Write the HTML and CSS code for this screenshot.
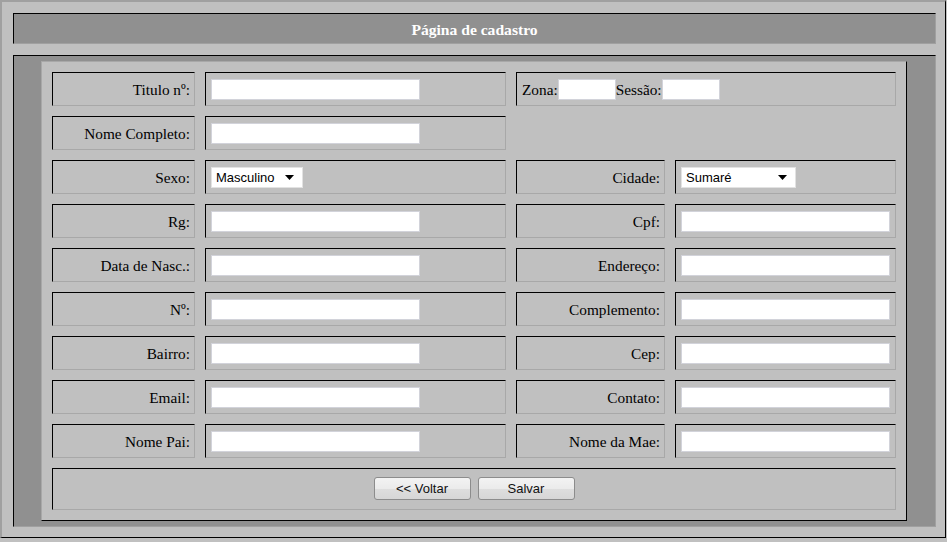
FILE: index.html
```html
<!DOCTYPE html>
<html lang="pt-BR">
<head>
<meta charset="utf-8">
<title>Página de cadastro</title>
<link rel="stylesheet" href="styles.css">
</head>
<body>
<div class="frame">
  <div class="title-cell">Página de cadastro</div>
  <div class="main-cell">
    <form class="form-table">
      <div class="cell label">Titulo nº:</div>
      <div class="cell field"><input class="text" type="text"></div>
      <div class="cell field span2 inline"><span>Zona:</span><input class="small" type="text"><span>Sessão:</span><input class="small" type="text"></div>

      <div class="cell label">Nome Completo:</div>
      <div class="cell field"><input class="text" type="text"></div>
      <div class="span2"></div>

      <div class="cell label">Sexo:</div>
      <div class="cell field"><select class="sel sel-sexo"><option>Masculino</option><option>Feminino</option></select></div>
      <div class="cell label">Cidade:</div>
      <div class="cell field"><select class="sel sel-cidade"><option>Sumaré</option></select></div>

      <div class="cell label">Rg:</div>
      <div class="cell field"><input class="text" type="text"></div>
      <div class="cell label">Cpf:</div>
      <div class="cell field"><input class="text" type="text"></div>

      <div class="cell label">Data de Nasc.:</div>
      <div class="cell field"><input class="text" type="text"></div>
      <div class="cell label">Endereço:</div>
      <div class="cell field"><input class="text" type="text"></div>

      <div class="cell label">Nº:</div>
      <div class="cell field"><input class="text" type="text"></div>
      <div class="cell label">Complemento:</div>
      <div class="cell field"><input class="text" type="text"></div>

      <div class="cell label">Bairro:</div>
      <div class="cell field"><input class="text" type="text"></div>
      <div class="cell label">Cep:</div>
      <div class="cell field"><input class="text" type="text"></div>

      <div class="cell label">Email:</div>
      <div class="cell field"><input class="text" type="text"></div>
      <div class="cell label">Contato:</div>
      <div class="cell field"><input class="text" type="text"></div>

      <div class="cell label">Nome Pai:</div>
      <div class="cell field"><input class="text" type="text"></div>
      <div class="cell label">Nome da Mae:</div>
      <div class="cell field"><input class="text" type="text"></div>

      <div class="cell actions span4">
        <button type="button" class="btn">&lt;&lt; Voltar</button>
        <button type="button" class="btn">Salvar</button>
      </div>
    </form>
  </div>
</div>
</body>
</html>
```

FILE: styles.css
```css
html, body {
  margin: 0;
  padding: 0;
  background: #c0c0c0;
}

body {
  font-family: "Liberation Serif", "Times New Roman", serif;
  font-size: 15.3px;
  color: #000;
}

.frame {
  box-sizing: border-box;
  width: 946px;
  height: 538px;
  border-style: solid;
  border-width: 2px 1px 1px 2px;
  border-color: #a0a0a0 #000 #000 #a0a0a0;
  padding: 11px 9px 10px 11px;
  display: flex;
  flex-direction: column;
  gap: 11px;
}

.title-cell {
  box-sizing: border-box;
  height: 31px;
  background: #909090;
  border-style: solid;
  border-width: 1px;
  border-color: #000 #a0a0a0 #a0a0a0 #000;
  color: #fff;
  font-size: 15.6px;
  font-weight: bold;
  display: flex;
  align-items: center;
  justify-content: center;
  padding-top: 3px;
}

.main-cell {
  box-sizing: border-box;
  height: 472px;
  background: #909090;
  border-style: solid;
  border-width: 1px;
  border-color: #000 #a0a0a0 #a0a0a0 #000;
  padding: 5px 28px 5px 27px;
}

.form-table {
  box-sizing: border-box;
  margin: 0;
  width: 866px;
  height: 460px;
  background: #c0c0c0;
  border-style: solid;
  border-width: 1px;
  border-color: #a8a8a8 #000 #000 #a8a8a8;
  padding: 10px;
  display: grid;
  grid-template-columns: 143px 301px 149px 221px;
  grid-template-rows: repeat(9, 34px) 42px;
  gap: 10px;
}

.cell {
  box-sizing: border-box;
  border-style: solid;
  border-width: 1px;
  border-color: #000 #a8a8a8 #a8a8a8 #000;
  display: flex;
  align-items: center;
}

.span2 { grid-column: span 2; }
.span4 { grid-column: span 4; }

.label {
  justify-content: flex-end;
  padding-right: 4px;
  padding-top: 2px;
  white-space: nowrap;
}

.field {
  padding-left: 5px;
}

.inline span {
  padding-top: 2px;
}

input {
  box-sizing: border-box;
  height: 21px;
  margin: 0;
  background: #fff;
  border: 1px solid #d2d3da;
  font-family: "Liberation Sans", Arial, sans-serif;
  font-size: 13px;
  padding: 0 2px;
}

.text { width: 209px; }
.small { width: 58px; }

.sel {
  box-sizing: border-box;
  height: 21px;
  margin: 0;
  -webkit-appearance: none;
  appearance: none;
  background-color: #fff;
  background-image: url("data:image/svg+xml,%3Csvg xmlns='http://www.w3.org/2000/svg' width='9' height='5'%3E%3Cpath d='M0 0h9L4.5 5z' fill='%23000'/%3E%3C/svg%3E");
  background-repeat: no-repeat;
  background-position: right 8px center;
  border: 1px solid #e2e2e2;
  border-radius: 0;
  font-family: "Liberation Sans", Arial, sans-serif;
  font-size: 13px;
  color: #000;
  padding: 0 0 0 4px;
}

.sel-sexo { width: 92px; }
.sel-cidade { width: 115px; }

.actions {
  justify-content: center;
  gap: 7px;
  padding-bottom: 1px;
}

.btn {
  box-sizing: border-box;
  width: 97px;
  height: 23px;
  margin: 0;
  border: 1px solid #8c8c8c;
  border-radius: 3px;
  background: linear-gradient(#f3f3f3, #ebebeb 50%, #dedede 51%, #d6d6d6);
  font-family: "Liberation Sans", Arial, sans-serif;
  font-size: 13px;
  color: #111;
  padding: 0;
}
```
